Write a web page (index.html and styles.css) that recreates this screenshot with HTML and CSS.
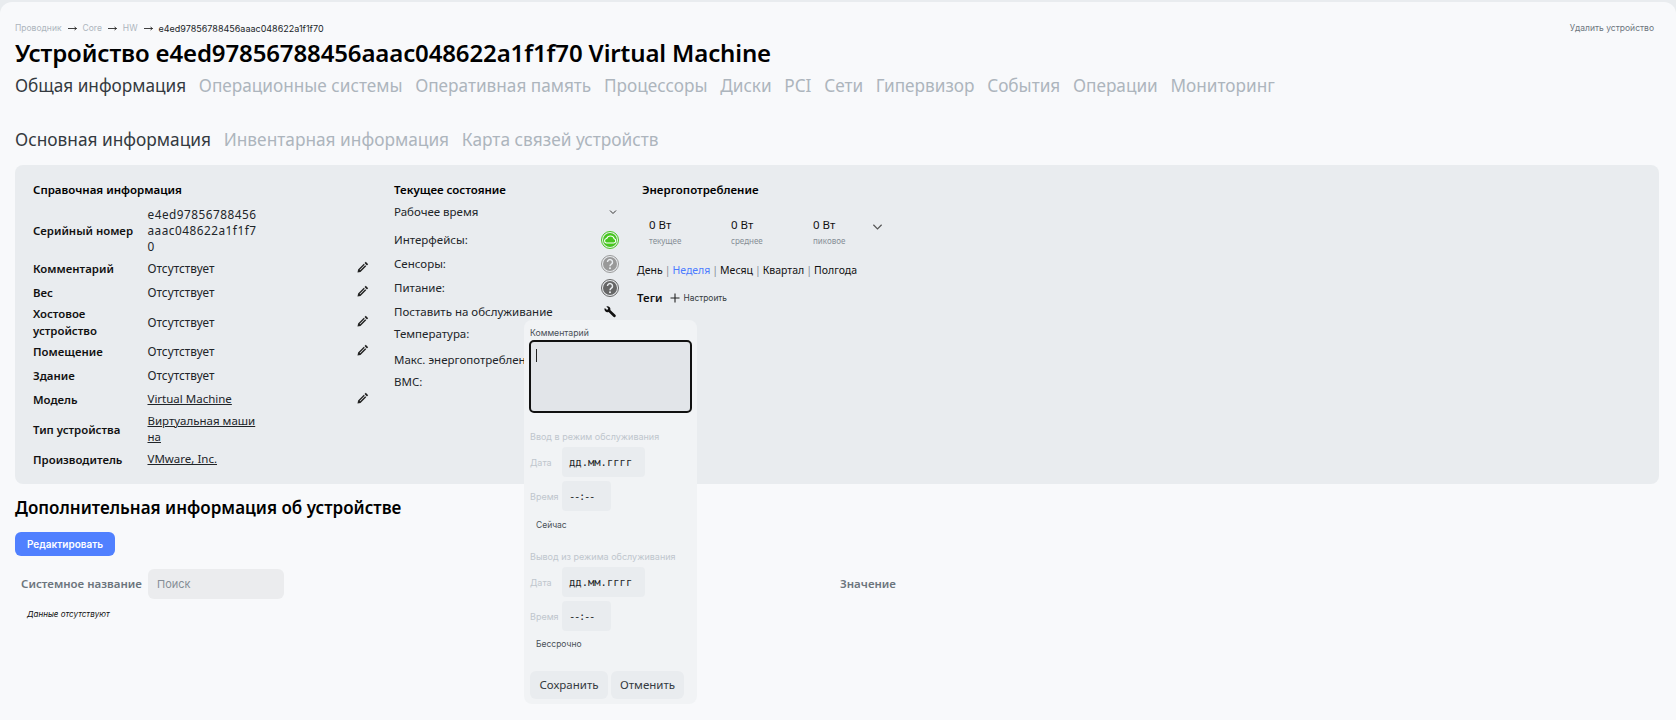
FILE: index.html
```html
<!DOCTYPE html>
<html lang="ru">
<head>
<meta charset="utf-8">
<title>Устройство</title>
<link rel="stylesheet" href="styles.css">
</head>
<body>
<svg class="defs" width="0" height="0">
  <symbol id="pencil" viewBox="0 0 12 12"><path d="M8.800.8l2.400 2.400-1.300 1.300-2.400-2.400zM6.800 2.800l2.400 2.400-5.700 5.700-3 .6.600-3zM2.700 8.800l.5.500 5-5-.5-.5z" fill-rule="evenodd"/></symbol>
  <symbol id="q" viewBox="0 0 18 18"><circle cx="9" cy="9" r="8.500" fill="none" stroke="currentColor" stroke-width="1"/><circle cx="9" cy="9" r="7" fill="currentColor"/><path d="M6.500 7.100a2.500 2.500 0 1 1 3.900 2.100c-.9.600-1.400 1-1.400 2" fill="none" stroke="#e8ebee" stroke-width="1.500"/><circle cx="9" cy="13.300" r="1" fill="#e8ebee"/></symbol>
</svg>
<main class="page">
  <header class="top">
    <nav class="crumbs"><span>Проводник</span><svg class="arr" viewBox="0 0 9 5"><path d="M0 2.500h8.500M6.500 1l2 1.500-2 1.500" fill="none" stroke="#111" stroke-width=".8"/></svg><span>Core</span><svg class="arr" viewBox="0 0 9 5"><path d="M0 2.500h8.500M6.500 1l2 1.500-2 1.500" fill="none" stroke="#111" stroke-width=".8"/></svg><span>HW</span><svg class="arr" viewBox="0 0 9 5"><path d="M0 2.500h8.500M6.500 1l2 1.500-2 1.500" fill="none" stroke="#111" stroke-width=".8"/></svg><b>e4ed97856788456aaac048622a1f1f70</b></nav>
    <a class="delete">Удалить устройство</a>
  </header>
  <h1 class="title">Устройство e4ed97856788456aaac048622a1f1f70 Virtual Machine</h1>
  <nav class="tabs"><a class="on">Общая информация</a><a>Операционные системы</a><a>Оперативная память</a><a>Процессоры</a><a>Диски</a><a>PCI</a><a>Сети</a><a>Гипервизор</a><a>События</a><a>Операции</a><a>Мониторинг</a></nav>
  <nav class="tabs sub"><a class="on">Основная информация</a><a>Инвентарная информация</a><a>Карта связей устройств</a></nav>

  <section class="panel">
    <div class="col info">
      <h3>Справочная информация</h3>
      <div class="row r-ser"><span class="k">Серийный номер</span><span class="v serial">e4ed97856788456<br>aaac048622a1f1f7<br>0</span></div>
      <div class="row"><span class="k">Комментарий</span><span class="v">Отсутствует</span><svg class="pen"><use href="#pencil"/></svg></div>
      <div class="row"><span class="k">Вес</span><span class="v">Отсутствует</span><svg class="pen"><use href="#pencil"/></svg></div>
      <div class="row r-host"><span class="k">Хостовое устройство</span><span class="v">Отсутствует</span><svg class="pen"><use href="#pencil"/></svg></div>
      <div class="row"><span class="k">Помещение</span><span class="v">Отсутствует</span><svg class="pen"><use href="#pencil"/></svg></div>
      <div class="row"><span class="k">Здание</span><span class="v">Отсутствует</span></div>
      <div class="row"><span class="k">Модель</span><a class="v link">Virtual Machine</a><svg class="pen"><use href="#pencil"/></svg></div>
      <div class="row r-type"><span class="k">Тип устройства</span><a class="v link">Виртуальная машина</a></div>
      <div class="row"><span class="k">Производитель</span><a class="v link">VMware, Inc.</a></div>
    </div>
    <div class="col state">
      <h3>Текущее состояние</h3>
      <div class="srow s-up"><span>Рабочее время</span><svg class="chev-s" viewBox="0 0 8 6"><path d="M1 1.500l3 3 3-3" fill="none" stroke="#333" stroke-width="1"/></svg></div>
      <div class="srow"><span>Интерфейсы:</span>
        <svg class="st" viewBox="0 0 18 18"><circle cx="9" cy="9" r="8.500" fill="none" stroke="#47c61f" stroke-width="1"/><circle cx="9" cy="9" r="7" fill="#47c61f"/><path d="M5.200 12h7.600a2.200 2.200 0 0 0 .4-4.300A4 4 0 0 0 5.700 7.500 2.300 2.300 0 0 0 5.200 12z" fill="none" stroke="#fff" stroke-width="1.100"/></svg></div>
      <div class="srow"><span>Сенсоры:</span><svg class="st q1"><use href="#q"/></svg></div>
      <div class="srow"><span>Питание:</span><svg class="st q2"><use href="#q"/></svg></div>
      <div class="srow s-main"><span>Поставить на обслуживание</span><svg class="wrench" viewBox="0 0 12 12"><path d="M.8 1.900l2 1.800 1.100-.3.300-1.100L2.300.4a3 3 0 0 1 4 3.600l5 4.700a1.300 1.300 0 0 1-1.900 2L4.600 6A3 3 0 0 1 .8 1.900z"/></svg></div>
      <div class="srow s-t"><span>Температура:</span></div>
      <div class="srow s-t2"><span>Макс. энергопотребление:</span></div>
      <div class="srow s-t3"><span>BMC:</span></div>
    </div>
    <div class="col power">
      <h3>Энергопотребление</h3>
      <div class="meters">
        <div class="m"><b>0 Вт</b><small>текущее</small></div>
        <div class="m"><b>0 Вт</b><small>среднее</small></div>
        <div class="m"><b>0 Вт</b><small>пиковое</small></div>
        <svg class="chev" viewBox="0 0 12 8"><path d="M1.500 1.500L6 6l4.500-4.500" fill="none" stroke="#555" stroke-width="1.300"/></svg>
      </div>
      <div class="ranges"><a>День</a><i>|</i><a class="act">Неделя</a><i>|</i><a>Месяц</a><i>|</i><a>Квартал</a><i>|</i><a>Полгода</a></div>
      <div class="tags"><b>Теги</b><svg class="plus" viewBox="0 0 10 10"><path d="M5 .5v9M.5 5h9" stroke="#222" stroke-width="1.100"/></svg><span>Настроить</span></div>
    </div>
  </section>

  <h2 class="sect">Дополнительная информация об устройстве</h2>
  <button class="edit">Редактировать</button>
  <div class="thead"><span class="th first">Системное название</span><span class="search">Поиск</span><span class="th val">Значение</span></div>
  <p class="empty">Данные отсутствуют</p>

  <aside class="pop">
    <label class="cap">Комментарий</label>
    <div class="area"><span class="caret"></span></div>
    <div class="h5">Ввод в режим обслуживания</div>
    <div class="fld"><span class="fl">Дата</span><span class="inp date">дд.мм.гггг</span></div>
    <div class="fld"><span class="fl">Время</span><span class="inp time">--:--</span></div>
    <div class="opt">Сейчас</div>
    <div class="h5 h5b">Вывод из режима обслуживания</div>
    <div class="fld"><span class="fl">Дата</span><span class="inp date">дд.мм.гггг</span></div>
    <div class="fld"><span class="fl">Время</span><span class="inp time">--:--</span></div>
    <div class="opt opt2">Бессрочно</div>
    <div class="btns"><button class="save">Сохранить</button><button class="cancel">Отменить</button></div>
  </aside>
</main>
</body>
</html>
```
FILE: styles.css
```css
* { box-sizing: border-box; }
html, body { margin: 0; height: 720px; overflow: hidden; background: #e9ecef; }
body { font-family: "Inter", "Noto Sans", sans-serif; color: #111; padding-top: 2px; }
.defs { position: absolute; }
.page { position: relative; height: 718px; background: #f8f9fb; border-radius: 12px 12px 0 0; padding: 20px 17px 0 15px; }
.top { display: flex; justify-content: space-between; align-items: center; height: 12px; margin-bottom: 1px; padding-right: 5px; }
.crumbs { display: flex; align-items: center; font-size: 8.500px; color: #adb5bd; }
.arr { width: 9px; height: 5px; margin: 0 5.500px 0 6.500px; flex: none; }
.crumbs b { font-weight: 400; font-size: 9px; color: #212529; }
.delete { font-size: 8.500px; color: #6c757d; }
.title { margin: 0; font: 600 24px/36px "Noto Sans", sans-serif; letter-spacing: -.13px; color: #000; height: 36px; }
.tabs { display: flex; gap: 12.700px; font: 400 17.200px/28px "Noto Sans", sans-serif; color: #adb5bd; margin-top: 1px; height: 28px; }
.tabs a.on { color: #343a40; }
.tabs.sub { margin-top: 26px; font-size: 17.300px; }
.panel { display: flex; margin-top: 11px; height: 319px; background: #e9ecef; border-radius: 8px; padding: 13px 18px 0; }
.col h3 { margin: 0; font: 600 11.500px/24px "Noto Sans", sans-serif; color: #000; }
.info { width: 361px; }
.row { display: flex; align-items: center; min-height: 24px; position: relative; }
.k { width: 114.500px; font: 600 11.400px/17px "Noto Sans", sans-serif; color: #111; padding-right: 8px; flex: none; }
.v { width: 108px; word-break: break-all; font: 400 11.800px/16px "Noto Sans", sans-serif; color: #212529; }
.serial { letter-spacing: .5px; white-space: nowrap; }
.link { width: 110px; font-size: 11.500px; text-decoration: underline; color: #212529; }
.pen { width: 12px; height: 12px; margin: -2px 0 0 101px; fill: #222; flex: none; }
.link + .pen { margin-left: 99px; }
.r-ser { margin-top: 4px; min-height: 48px; margin-bottom: 2px; }
.r-host { min-height: 35px; }
.r-type { min-height: 36px; }
.state { width: 248px; position: relative; }
.srow { display: flex; justify-content: space-between; align-items: center; width: 225px; height: 24px; font: 400 11.500px/24px "Noto Sans", sans-serif; color: #212529; }
.s-up { height: 20px; margin-bottom: 6px; }
.chev-s { width: 8px; height: 6px; margin-right: 2px; }
.st { width: 18px; height: 18px; }
.q1 { color: #999; }
.q2 { color: #666; }
.wrench { width: 12px; height: 12px; margin-right: 3px; fill: #111; }
.s-t { margin-top: -2px; }
.s-t2 { margin-top: 2px; }
.s-t3 { margin-top: -2px; }
.power { width: 300px; }
.meters { display: flex; align-items: flex-start; margin: 15px 0 0 7px; }
.m { width: 82px; display: flex; flex-direction: column; flex: none; }
.m b { font: 400 11.500px/16px "Noto Sans", sans-serif; }
.m small { font: 400 8px/16px "Noto Sans", sans-serif; color: #868e96; }
.chev { width: 11px; height: 8px; margin: 6px 0 0 -23px; flex: none; }
.ranges { margin: 13px 0 0 -5px; font: 400 10.500px/16px "Noto Sans", sans-serif; color: #111; display: flex; gap: 2px; }
.ranges i { font-style: normal; color: #868e96; }
.ranges .act { color: #4c7cff; }
.tags { margin: 12px 0 0 -5px; display: flex; align-items: center; height: 16px; }
.tags b { font: 600 11.500px/16px "Noto Sans", sans-serif; }
.tags .plus { width: 10px; height: 10px; margin: 0 3px 0 8px; }
.tags span { font-size: 8.400px; color: #343a40; }
.sect { margin: 11px 0 0; font: 600 17px/26px "Noto Sans", sans-serif; color: #000; height: 26px; }
.edit { display: block; margin-top: 11px; width: 100px; height: 24px; background: #5080ff; color: #fff; font: 600 10px/24px "Inter", sans-serif; border: 0; border-radius: 6px; padding: 0; }
.thead { display: flex; align-items: center; margin-top: 13px; height: 30px; padding-left: 6px; }
.th { font: 600 11.500px/30px "Noto Sans", sans-serif; color: #6c757d; }
.first { width: 127px; }
.search { width: 136px; height: 30px; background: #ebecee; border-radius: 6px; font-size: 11px; line-height: 30px; padding-left: 9px; color: #868e96; }
.val { margin-left: 556px; }
.empty { margin: 7px 0 0 12px; font: italic 400 8px/16px "Inter", sans-serif; color: #111; }
.pop { position: absolute; left: 524px; top: 318px; width: 173px; height: 384px; background: #f1f3f5; border-radius: 8px; padding: 7px 5px 0 6px; }
.cap { display: block; font-size: 8.700px; line-height: 12px; color: #495057; }
.area { margin: 1px 0 0 -1px; width: 163px; height: 73px; background: #e2e5e9; border: 2px solid #111; border-radius: 5px; padding: 7px 0 0 5px; }
.caret { display: block; width: 1px; height: 13px; background: #222; }
.h5 { margin-top: 18px; font-size: 9px; line-height: 12px; color: #bfc6cd; }
.h5b { margin-top: 20px; }
.fld { display: flex; align-items: center; margin-bottom: 4px; }
.h5 + .fld { margin-top: 4px; }
.fl { width: 32px; font-size: 9px; color: #bfc6cd; }
.inp { display: block; height: 30px; background: #e9ecef; border-radius: 4px; font: 400 10.500px/30px "DejaVu Sans Mono", monospace; color: #212529; padding-left: 7px; }
.date { width: 83px; }
.time { width: 49px; letter-spacing: -1.300px; }
.opt { margin: 8px 0 0 6px; font-size: 8.500px; line-height: 12px; color: #495057; }
.opt2 { margin-top: 7px; }
.btns { display: flex; gap: 3px; margin-top: 21px; }
.btns button { height: 28px; border: 0; border-radius: 6px; background: #e9ecef; color: #343a40; padding: 0; font: 400 11.500px/28px "Noto Sans", sans-serif; }
.save { width: 78px; }
.cancel { width: 73px; }
```
